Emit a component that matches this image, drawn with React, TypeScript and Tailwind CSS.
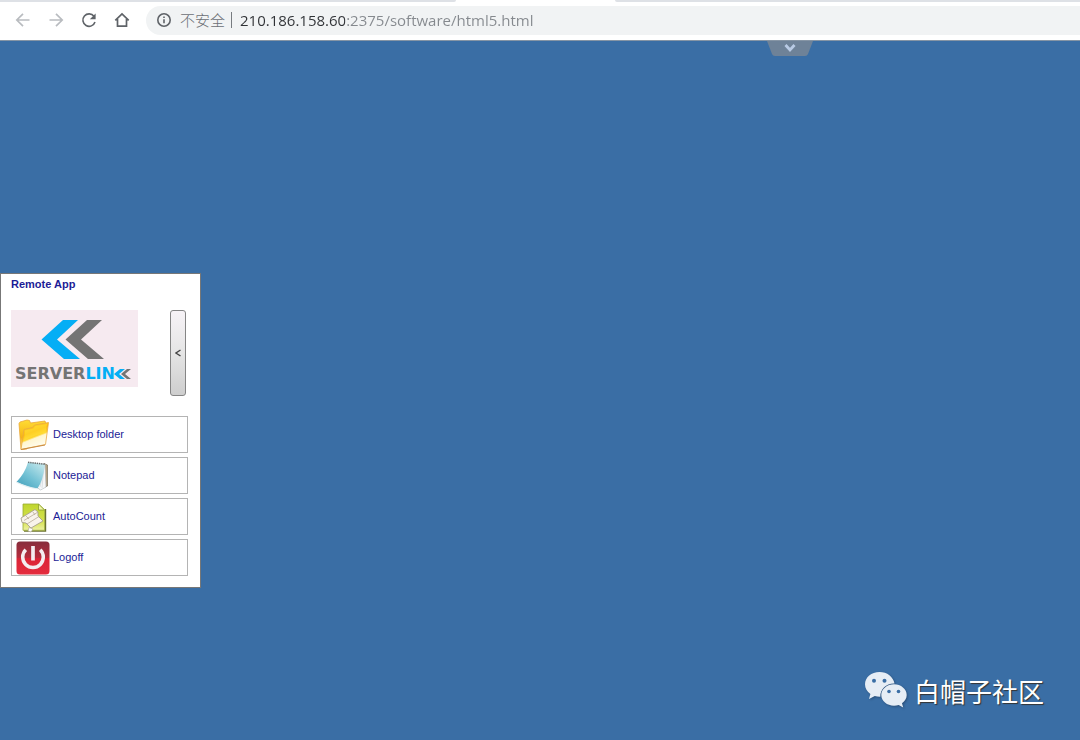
import React from "react";

function BackIcon() {
  return (
    <svg width="16" height="16" viewBox="0 0 16 16" fill="none" stroke="#b9bcc0" strokeWidth="1.7">
      <path d="M14.5 8H2M8 1.8 1.8 8 8 14.2" />
    </svg>
  );
}

function ForwardIcon() {
  return (
    <svg width="16" height="16" viewBox="0 0 16 16" fill="none" stroke="#b9bcc0" strokeWidth="1.7">
      <path d="M1.5 8H14M8 1.8 14.2 8 8 14.2" />
    </svg>
  );
}

function ReloadIcon() {
  return (
    <svg width="16" height="16" viewBox="0 0 16 16" fill="none">
      <path d="M13 4.300A6.2 6.2 0 1 0 14 10" stroke="#5f6368" strokeWidth="1.6" />
      <path d="M14.600 1.400v5.800H8.800z" fill="#5f6368" />
    </svg>
  );
}

function HomeIcon() {
  return (
    <svg width="16" height="16" viewBox="0 0 16 16" fill="none" stroke="#5f6368" strokeWidth="1.7">
      <path d="M1.3 8.400 8 1.900l6.700 6.500M3.500 7v7.100h9V7" />
    </svg>
  );
}

function InfoIcon() {
  return (
    <svg width="16" height="16" viewBox="0 0 16 16" fill="none" stroke="#5f6368" strokeWidth="1.6">
      <circle cx="8" cy="8" r="6.200" />
      <path d="M8 7.200v4M8 4.400v1.700" />
    </svg>
  );
}

function FolderIcon() {
  return (
    <svg width="34" height="34" viewBox="0 0 34 34">
      <defs>
        <linearGradient id="folderFront" x1="0" y1="0" x2="0.4" y2="1">
          <stop offset="0" stopColor="#ffed4d" />
          <stop offset="0.45" stopColor="#fdb80b" />
          <stop offset="0.62" stopColor="#ffd62e" />
          <stop offset="0.68" stopColor="#fff6cf" />
          <stop offset="1" stopColor="#fffdf0" />
        </linearGradient>
        <linearGradient id="folderBack" x1="0" y1="0" x2="0" y2="1">
          <stop offset="0" stopColor="#ffdc35" />
          <stop offset="0.6" stopColor="#f6b414" />
          <stop offset="1" stopColor="#fff0b0" />
        </linearGradient>
      </defs>
      <path d="M3 5.500 4 4l7-2 2.500.500 1 2.500L29 3l1 3-19 25-6 .500z" fill="url(#folderBack)" stroke="#eaa73a" strokeWidth=".8" strokeLinejoin="round" />
      <path d="M8 11.500 16.500 9.500l2-2.500L32.500 4.500 29.500 26.500 5 31.500z" fill="url(#folderFront)" stroke="#eaa942" strokeWidth=".8" strokeLinejoin="round" />
      <path d="m9 12.500 8.500-2 2-2.500L31 6l-1.500 9Q19 16 8 23z" fill="#ffe13b" opacity=".55" />
      <path d="M5 31.500 29 27" stroke="#c98c45" strokeWidth="1" />
    </svg>
  );
}

function NotepadIcon() {
  return (
    <svg width="34" height="34" viewBox="0 0 34 34">
      <defs>
        <linearGradient id="padCover" x1="0" y1="1" x2="0.8" y2="0">
          <stop offset="0" stopColor="#3d9cb8" />
          <stop offset="0.5" stopColor="#74c2d5" />
          <stop offset="1" stopColor="#c1e6eb" />
        </linearGradient>
      </defs>
      <path d="M28 4.500 31.500 6v21L29 28z" fill="#b6a382" stroke="#77705d" strokeWidth=".700" />
      <path d="M29 5 30 28l-3.500 2-2 1-4-3z" fill="#f5f7f8" stroke="#adb6bb" strokeWidth=".600" />
      <path d="m28 6-2 23M28 8l-4 20" stroke="#c7ced3" strokeWidth=".600" />
      <path d="M12 3.200 29 5.200Q27 22 21.500 29.500 12 28.500 .500 23 9 14 12 3.200z" fill="url(#padCover)" />
      <path d="M.500 23.300Q12 28.800 21.500 29.800" fill="none" stroke="#e2eef1" strokeWidth="1.100" />
      <path d="m12 3.300 17.500 2" stroke="#6a6f70" strokeWidth="1.600" strokeDasharray="1.400 .800" />
    </svg>
  );
}

function AutoCountIcon() {
  return (
    <svg width="34" height="34" viewBox="0 0 34 34">
      <defs>
        <linearGradient id="sheet" x1="0" y1="0" x2="0" y2="1">
          <stop offset="0" stopColor="#bfd62e" />
          <stop offset="0.65" stopColor="#d6e24e" />
          <stop offset="1" stopColor="#edf1a4" />
        </linearGradient>
      </defs>
      <path d="M8 31h21.500V9" fill="none" stroke="#6b722f" strokeWidth="1.400" />
      <path d="M7 4h15.500l6 5.700v20.600H7z" fill="url(#sheet)" stroke="#9aab32" strokeWidth=".8" />
      <path d="M22.500 4v6h6z" fill="#eff5a9" stroke="#8da02c" strokeWidth=".800" />
      <path d="m5 18 14-8.500 3 2.500v4l5 5-12 7-5-5-4-.500z" fill="#f8f3eb" stroke="#a79f91" strokeWidth=".9" />
      <path d="m8 20.500 14-8.500M11 24l12-7.500M10 16l3 3M17 12l2 3" stroke="#b9ac97" strokeWidth=".800" />
      <path d="m13 27.500 4 1.500-2 3-3-1z" fill="#fff" stroke="#aaa391" strokeWidth=".600" />
    </svg>
  );
}

function PowerIcon() {
  return (
    <svg width="34" height="34" viewBox="0 0 34 34">
      <defs>
        <linearGradient id="powerFill" x1="0" y1="0" x2="0" y2="1">
          <stop offset="0" stopColor="#862d3c" />
          <stop offset="0.48" stopColor="#b52c3c" />
          <stop offset="0.52" stopColor="#db2437" />
          <stop offset="1" stopColor="#e42d3e" />
        </linearGradient>
      </defs>
      <rect x=".5" y=".5" width="33" height="33" rx="3.500" fill="url(#powerFill)" />
      <path d="M9.800 8.800a10.300 10.300 0 1 0 14.400 0" fill="none" stroke="#f4edf0" strokeWidth="3.500" />
      <path d="M17 5v14.500" stroke="#f4edf0" strokeWidth="3.700" />
    </svg>
  );
}

function ServerLinkLogo() {
  return (
    <svg width="127" height="77" viewBox="0 0 127 77" role="img" aria-label="ServerLink">
      <path fill="#f6eaf0" d="M0 0h127v77H0z" />
      <path fill="#05aef5" d="M52 10h15L46 29.500 69 49H53L30.500 29.500z" />
      <path fill="#747474" d="M76 10h15L70 29.500 93 49H77L54.500 29.500z" />
      <text x="4" y="69" className="font-['DejaVu_Sans',sans-serif] text-[16px] font-bold" fill="#747474">
        SERVER<tspan fill="#05aef5">LIN</tspan>
      </text>
      <path fill="#05aef5" d="M109 59h5l-6 5 6 5h-5l-6-5z" />
      <path fill="#747474" d="M116 59h4l-6 5 6 5h-4l-6-5z" />
    </svg>
  );
}

function WeChatIcon() {
  return (
    <svg width="44" height="40" viewBox="0 0 44 40" className="drop-shadow-[1px_1px_1px_#294e78]">
      <path fill="#e6edf5" d="M15.500 2C7.400 2 1 7.400 1 14.300c0 4 2.100 7.500 5.400 9.700L5 29l5.800-3q2.600.800 5.500.700c-.200-8 6.400-13.600 14.200-13.200C29.300 6.800 23.200 2 15.500 2z" />
      <path fill="#e6edf5" d="M30 14.200c-7 0-12.700 4.800-12.700 10.800S23 35.700 30 35.700q2.500 0 4.700-.700l4.500 2.500-1.200-4.300c2.900-2 4.700-4.900 4.700-8.200 0-6-5.700-10.800-12.700-10.800z" />
      <g fill="#3a6ea5">
        <circle cx="10" cy="10.700" r="2" />
        <circle cx="20.500" cy="10.700" r="2" />
        <circle cx="25" cy="21.500" r="1.800" />
        <circle cx="34.500" cy="21.500" r="1.800" />
      </g>
    </svg>
  );
}

const apps = [
  { name: "Desktop folder", icon: <FolderIcon /> },
  { name: "Notepad", icon: <NotepadIcon /> },
  { name: "AutoCount", icon: <AutoCountIcon /> },
  { name: "Logoff", icon: <PowerIcon /> },
];

function BrowserBar() {
  return (
    <header className="border-b border-[#8695a5] bg-white">
      <div className="flex h-0.5">
        <div className="w-[456px] rounded-br-sm bg-[#dee1e6]" />
        <div className="w-[159px]" />
        <div className="flex-1 rounded-bl-sm bg-[#dee1e6]" />
      </div>
      <div className="flex h-[38px] items-center pb-0.5 pl-[15px]">
        <nav className="mr-4 flex gap-[17px]">
          <button aria-label="Back"><BackIcon /></button>
          <button aria-label="Forward"><ForwardIcon /></button>
          <button aria-label="Reload"><ReloadIcon /></button>
          <button aria-label="Home"><HomeIcon /></button>
        </nav>
        <div className="flex h-[29px] flex-1 items-center rounded-l-full bg-[#f1f3f4] pl-2.5 font-['Open_Sans','Noto_Sans_CJK_SC',sans-serif] text-[15px]">
          <button className="flex items-center gap-2 text-[#6b6f74]">
            <InfoIcon />
            <span className="font-light">不安全</span>
          </button>
          <span className="mr-2 ml-1.5 h-4 w-px bg-[#777b80]" />
          <input
            aria-label="Address"
            defaultValue="210.186.158.60:2375/software/html5.html"
            spellCheck={false}
            className="min-w-0 flex-1 bg-linear-to-r from-[#303236] from-[105px] to-[#85898e] to-[105px] bg-clip-text text-transparent outline-none"
          />
        </div>
      </div>
    </header>
  );
}

function RemotePanel() {
  return (
    <section className="w-[201px] border border-[#777] bg-white px-2.5 pt-1 pb-[11px] font-['Liberation_Sans',Arial,sans-serif] text-[11px] text-[#1c1c96]">
      <h1 className="leading-3 font-bold">Remote App</h1>
      <div className="mt-5 flex items-start justify-between pr-1">
        <ServerLinkLogo />
        <button
          aria-label="Collapse panel"
          className="flex h-[86px] w-4 items-center justify-center rounded-[3px] border border-[#858585] bg-linear-to-b from-[#f7f3f7] via-[#e5e5e5] to-[#cecece]"
        >
          <svg width="6" height="8" viewBox="0 0 6 8" fill="none" stroke="#444" strokeWidth="1.400">
            <path d="M5.500 1 1 4l4.500 3" />
          </svg>
        </button>
      </div>
      <ul className="mt-5 flex flex-col gap-1">
        {apps.map((app) => (
          <li key={app.name}>
            <button className="flex h-[37px] w-[177px] items-center gap-[3px] border border-[#b4b4b4] pl-1">
              {app.icon}
              <span>{app.name}</span>
            </button>
          </li>
        ))}
      </ul>
    </section>
  );
}

export default function App() {
  return (
    <div className="flex min-h-screen flex-col bg-[#3a6ea5]">
      <BrowserBar />
      <main className="relative flex flex-1 flex-col justify-center pt-20">
        <button aria-label="Show toolbar" className="absolute top-0 left-[71%]">
          <svg width="46" height="15" viewBox="0 0 46 15">
            <path d="M0 0h46l-5 13q-.700 2-3 2H8q-2.300 0-3-2z" fill="#6e8298" />
            <path d="m18.500 4 4.500 5 4.500-5" fill="none" stroke="#b9cbe5" strokeWidth="2.800" />
          </svg>
        </button>
        <RemotePanel />
        <div className="absolute right-9 bottom-[30px] flex items-center gap-1.5 font-['Noto_Sans_CJK_SC',sans-serif] text-[26px] text-white">
          <WeChatIcon />
          <span className="[text-shadow:1px_1px_1px_#333]">白帽子社区</span>
        </div>
      </main>
    </div>
  );
}
